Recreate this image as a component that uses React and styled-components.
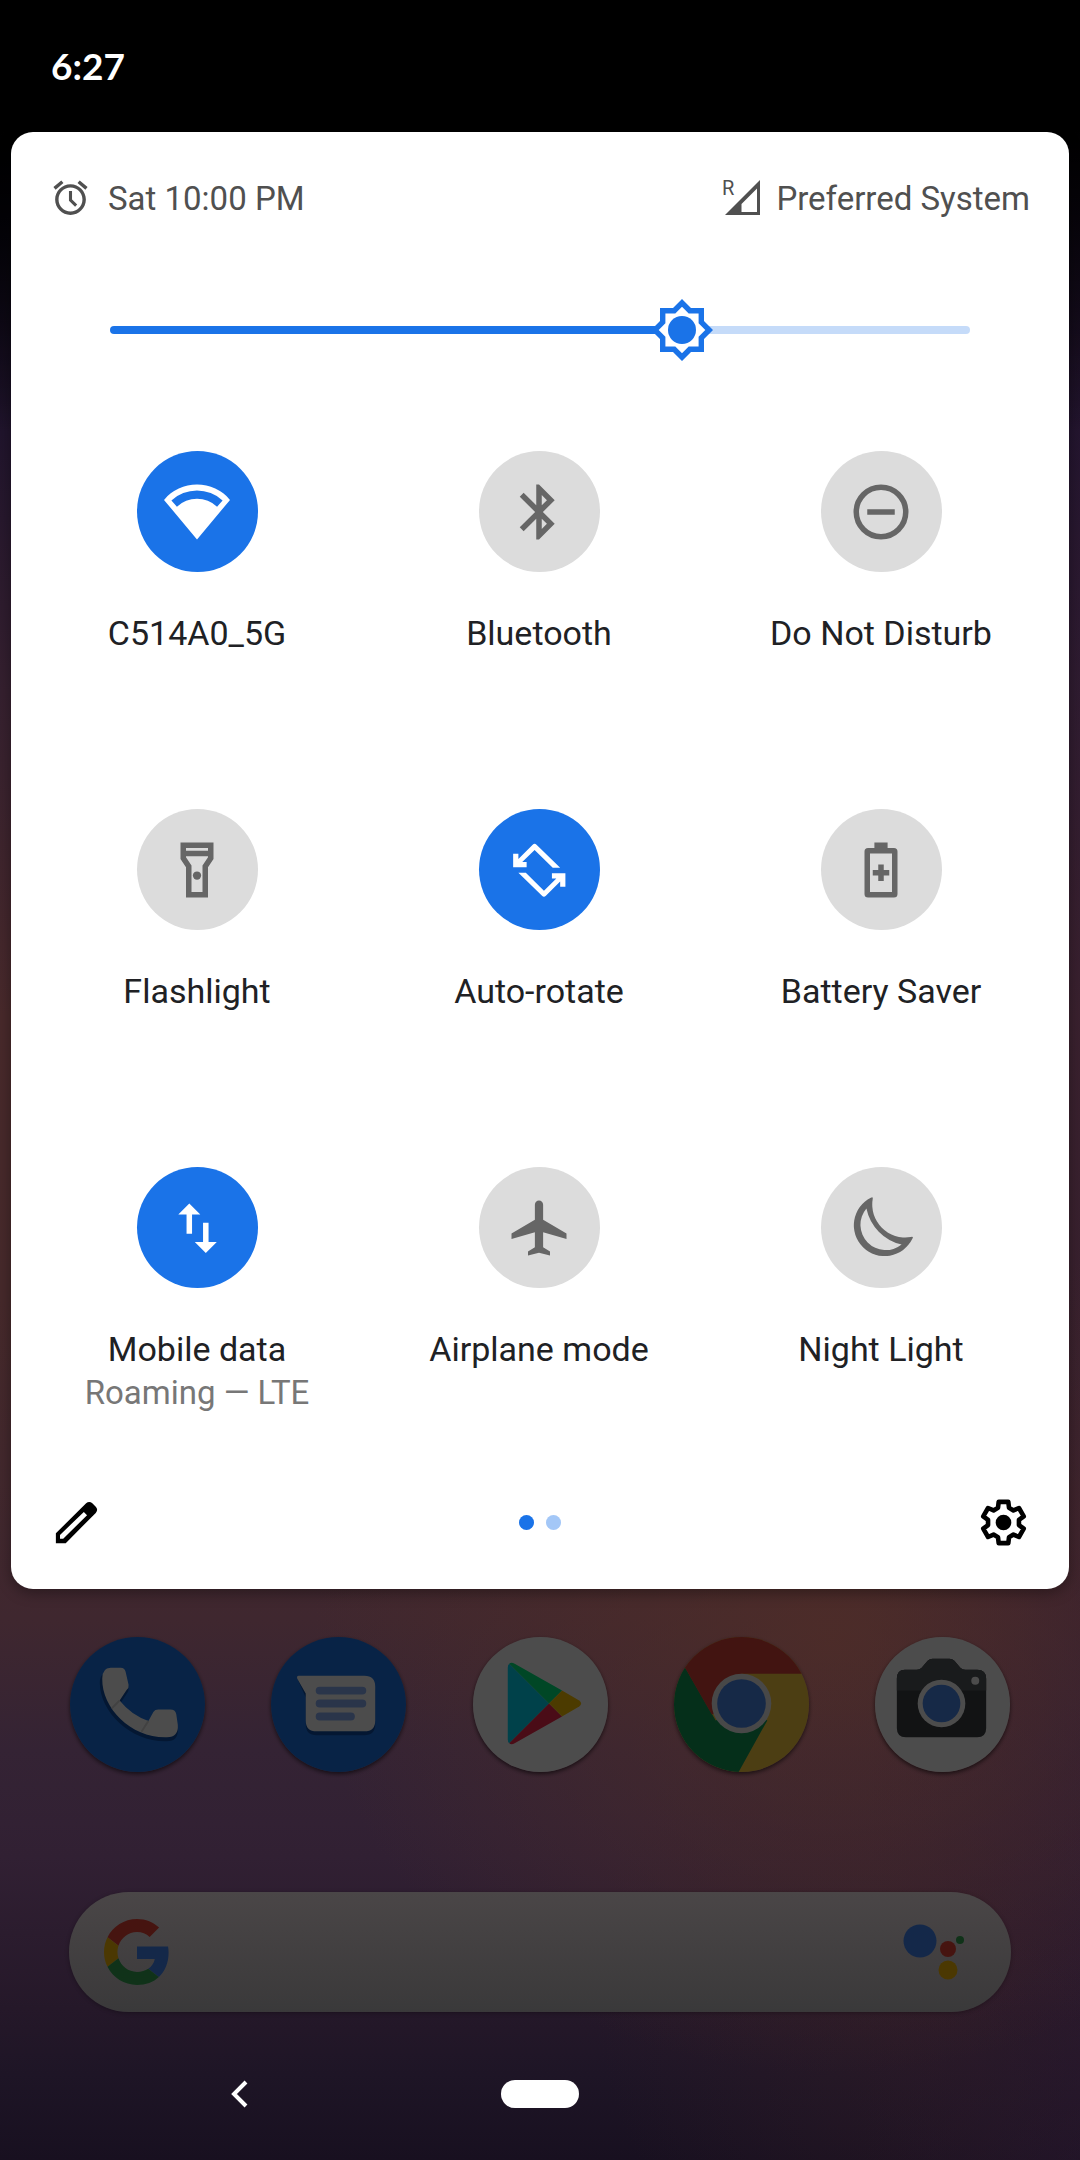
import React, { useState } from "react";
import styled, { createGlobalStyle } from "styled-components";

const BLUE = "#1a73e8";
const THUMB = 62;

const GlobalStyle = createGlobalStyle`
  *, *::before, *::after { box-sizing: border-box; }
  body { margin: 0; background: #000; }
  button { border: 0; padding: 0; background: none; font: inherit; color: inherit; cursor: pointer; }
  svg { display: block; }
`;

const Screen = styled.main`
  display: flex;
  flex-direction: column;
  min-height: 100vh;
  font-family: Roboto, "Noto Sans", sans-serif;
  background:
    linear-gradient(to bottom, #000 6%, rgba(0, 0, 0, 0) 20%),
    radial-gradient(ellipse 48% 20% at 77% 76%, rgba(82, 46, 38, 0.7), rgba(82, 46, 38, 0) 100%),
    radial-gradient(ellipse 30% 16% at 85% 92%, rgba(52, 30, 38, 0.5), rgba(52, 30, 38, 0) 100%),
    linear-gradient(to left, rgba(40, 22, 50, 0.45), rgba(40, 22, 50, 0) 20%),
    linear-gradient(
      to bottom,
      #0a0714 10%,
      #20142c 20%,
      #35202f 32%,
      #48292b 47%,
      #46292b 60%,
      #3f272f 75%,
      #342334 81%,
      #312033 86%,
      #251829 93%,
      #1e1526 96%,
      #181020 100%
    );
`;

const StatusBar = styled.header`
  display: flex;
  align-items: center;
  height: 132px;
  padding: 0 51px;
  color: #fff;
`;

const Clock = styled.time`
  font-family: Lato, Roboto, sans-serif;
  font-size: 37px;
  font-weight: 700;
  line-height: 48px;
`;

const Panel = styled.section`
  display: flex;
  flex-direction: column;
  margin: 0 11px;
  padding: 43px 0 39px;
  border-radius: 22px;
  background: #fff;
  box-shadow: 0 4px 14px rgba(0, 0, 0, 0.35);
`;

const InfoRow = styled.div`
  display: flex;
  justify-content: space-between;
  padding: 0 39px;
  color: #505050;
  font-size: 33px;
  line-height: 48px;
`;

const Info = styled.span`
  display: flex;
  align-items: center;
  gap: ${(p) => p.$gap}px;
  white-space: nowrap;
`;

const Slider = styled.input`
  appearance: none;
  display: block;
  height: ${THUMB}px;
  margin: 76px 99px 0;
  background: transparent;
  cursor: pointer;

  &::-webkit-slider-runnable-track {
    height: 8px;
    border-radius: 4px;
    background: linear-gradient(
      to right,
      ${BLUE} calc(31px + (100% - 62px) * var(--level)),
      #c5dbf9 calc(31px + (100% - 62px) * var(--level))
    );
  }

  &::-webkit-slider-thumb {
    appearance: none;
    width: ${THUMB}px;
    height: ${THUMB}px;
    margin-top: -27px;
    background: center / contain no-repeat
      url("data:image/svg+xml,%3Csvg xmlns='http://www.w3.org/2000/svg' viewBox='-31 -31 62 62'%3E%3Cpath fill='%231a73e8' d='M0-31 9-22H22V-9L31 0 22 9V22H9L0 31-9 22H-22V9L-31 0-22-9V-22H-9z'/%3E%3Cpath fill='%23fff' d='M0-23.300 6.700-16.600H16.600V-6.700L23.300 0 16.600 6.700V16.600H6.700L0 23.300-6.700 16.600H-16.600V6.700L-23.300 0-16.600-6.700V-16.600H-6.700z'/%3E%3Ccircle r='14' fill='%231a73e8'/%3E%3C/svg%3E");
  }
`;

const Tiles = styled.div`
  display: grid;
  grid-template-columns: repeat(3, 1fr);
  row-gap: 154px;
  margin-top: 90px;
  padding: 0 17px 0 15px;
`;

const Tile = styled.button`
  display: flex;
  flex-direction: column;
  align-items: center;
  justify-content: flex-start;
`;

const Disc = styled.span`
  display: grid;
  place-items: center;
  width: 121px;
  height: 121px;
  margin-bottom: 39px;
  border-radius: 50%;
  background: ${(p) => (p.$on ? BLUE : "#dcdcdc")};
  color: ${(p) => (p.$on ? "#fff" : "#666")};
`;

const TileLabel = styled.span`
  color: #202124;
  font-size: 34px;
  line-height: 44px;
`;

const TileDetail = styled.span`
  color: #777;
  font-size: 33px;
  line-height: 44px;
`;

const PanelFooter = styled.footer`
  display: grid;
  grid-template-columns: 1fr auto 1fr;
  align-items: center;
  margin-top: 80px;
  padding: 0 38px;
  color: #000;
`;

const FooterButton = styled.button`
  justify-self: ${(p) => p.$side};
`;

const Pager = styled.div`
  display: flex;
  gap: 12px;
`;

const Dot = styled.span`
  width: 15px;
  height: 15px;
  border-radius: 50%;
  background: ${(p) => (p.$current ? BLUE : "#a3c7f7")};
`;

const Dock = styled.nav`
  display: flex;
  justify-content: space-between;
  margin-top: 48px;
  padding: 0 70px;
`;

const AppButton = styled.button`
  width: 135px;
  height: 135px;
  border-radius: 50%;
  box-shadow: 0 2px 4px rgba(0, 0, 0, 0.6);
  filter: brightness(0.3);
`;

const SearchBar = styled.form`
  display: flex;
  align-items: center;
  height: 120px;
  margin: 120px 69px 0;
  padding: 0 45px 0 35px;
  border-radius: 60px;
  background: linear-gradient(to bottom, #4a4647, #3a393a);
  box-shadow: 0 1px 4px rgba(0, 0, 0, 0.3);
`;

const SearchField = styled.input`
  flex: 1;
  min-width: 0;
  border: 0;
  outline: 0;
  background: transparent;
  color: #fff;
  font: 33px Roboto, sans-serif;
`;

const SearchButton = styled.button`
  filter: brightness(0.3);
`;

const NavBar = styled.nav`
  display: grid;
  grid-template-columns: repeat(3, 1fr);
  align-items: center;
  justify-items: center;
  flex: 1;
  padding: 16px 88px 0;
`;

const HomePill = styled.button`
  width: 78px;
  height: 28px;
  border-radius: 14px;
  background: #fff;
`;

function Icon({ size = 66, children }) {
  return (
    <svg width={size} height={size} viewBox="0 0 24 24" fill="currentColor" aria-hidden="true">
      {children}
    </svg>
  );
}

function AppIcon({ children }) {
  return (
    <svg width="135" height="135" viewBox="0 0 136 136" aria-hidden="true">
      {children}
    </svg>
  );
}

const rotateArrow =
  "M19.700 11.200L11.100 2.800Q10.400 2.100 9.700 2.800L4.500 8V6.100H2.600V11H7.500V9.100H5.900L10.400 4.700L17 11.200z";

// One tooth of the gear, repeated every sixty degrees around the centre.
const gearTooth = [
  [-2.4, -6.4],
  [-2.1, -9],
  [2.1, -9],
  [2.4, -6.4],
];
const gearPoints = [0, 1, 2, 3, 4, 5]
  .flatMap((step) => {
    const angle = (step * Math.PI) / 3;
    return gearTooth.map(([x, y]) => [
      12 + x * Math.cos(angle) - y * Math.sin(angle),
      12 + x * Math.sin(angle) + y * Math.cos(angle),
    ]);
  })
  .map(([x, y]) => `${x.toFixed(2)},${y.toFixed(2)}`)
  .join(" ");

const tiles = [
  {
    id: "wifi",
    label: "C514A0_5G",
    on: true,
    icon: (
      <path
        fillRule="evenodd"
        d="M12 22L0 7.600A15.600 15.600 0 0 1 24 7.600zM2.700 7.800L4.700 10.100A10.600 10.600 0 0 1 19.300 10.100L21.300 7.800A13.800 13.800 0 0 0 2.700 7.800z"
      />
    ),
  },
  {
    id: "bluetooth",
    label: "Bluetooth",
    icon: (
      <path d="M17.710 7.710L12 2h-1v7.590L6.410 5 5 6.410 10.590 12 5 17.590 6.410 19 11 14.410V22h1l5.710-5.710-4.300-4.290 4.300-4.290zM13 5.830l1.880 1.880L13 9.590V5.830zm1.880 10.460L13 18.170v-3.760l1.880 1.880z" />
    ),
  },
  {
    id: "dnd",
    label: "Do Not Disturb",
    icon: (
      <>
        <circle cx="12" cy="12" r="9" fill="none" stroke="currentColor" strokeWidth="2" />
        <path d="M7 11h10v2H7z" />
      </>
    ),
  },
  {
    id: "flashlight",
    label: "Flashlight",
    icon: (
      <>
        <path
          fillRule="evenodd"
          d="M18 2H6v6l2 3v11h8V11l2-3V2zM16 4v1H8V4h8zM14 10.400V20h-4v-9.610l-2-3V7h8v.39l-2 3.010z"
        />
        <circle cx="12" cy="14" r="1.500" />
      </>
    ),
  },
  {
    id: "rotate",
    label: "Auto-rotate",
    on: true,
    icon: (
      <>
        <path d={rotateArrow} />
        <path d={rotateArrow} transform="rotate(180 12.100 12.100)" />
      </>
    ),
  },
  {
    id: "battery",
    label: "Battery Saver",
    icon: (
      <path
        fillRule="evenodd"
        d="M9.600 2h4.800v2h2.300q1.300 0 1.300 1.300v15.400q0 1.300-1.300 1.300H7.300Q6 22 6 20.700V5.300Q6 4 7.300 4h2.300zM8 6v14h8V6zM11 10h2v2h2v2h-2v2h-2v-2H9v-2h2z"
      />
    ),
  },
  {
    id: "data",
    label: "Mobile data",
    detail: "Roaming — LTE",
    on: true,
    icon: <path d="M9.200 3.100l-4 4h3v7h2v-7h3zM16.200 17.100v-7h-2v7h-3l4 4 4-4z" />,
  },
  {
    id: "airplane",
    label: "Airplane mode",
    icon: (
      <path d="M22 16v-2l-8.500-5V3.500c0-.83-.67-1.500-1.500-1.500s-1.500.67-1.500 1.500V9L2 14v2l8.500-2.500V19L8 20.500V22l4-1 4 1v-1.500L13.500 19v-5.500L22 16z" />
    ),
  },
  {
    id: "night",
    label: "Night Light",
    icon: (
      <path
        fillRule="evenodd"
        d="M8.300 1Q9.100.4 9 1.400A12 12 0 0 0 22.800 15.300Q24 15 23.400 15.900A11.200 11.200 0 1 1 8.300 1zM6.700 4.900A9.200 9.200 0 0 0 19.500 18A17 17 0 0 1 6.700 4.900z"
      />
    ),
  },
];

const apps = [
  {
    name: "Phone",
    art: (
      <>
        <circle cx="68" cy="68" r="68" fill="#1b75e8" />
        <path
          fill="#0d4ea6"
          d="M41 35H51q4 0 5 4l3 13q.6 3-2 5.500L50 68q12 15 29 20.500l5-9q1.500-2.500 5-2.500h12q5 0 6 4.500l1.600 11q1 12.500-11 12.500C62 106 30 76 30 46q0-11 11-11z"
        />
        <path
          fill="#fff"
          d="M41 31H51q4 0 5 4l3 13q.6 3-2 5.500L50 64q12 15 29 20.500l5-9q1.500-2.500 5-2.500h12q5 0 6 4.500l1.600 11q1 12.500-11 12.500C62 102 32 72 32.500 42q0-11 8.500-11z"
        />
        <path d="M50 64l-8 8M79 84.500l-7 11" stroke="#dcdcdc" strokeWidth="2" />
      </>
    ),
  },
  {
    name: "Messages",
    art: (
      <>
        <circle cx="68" cy="68" r="68" fill="#1b75e8" />
        <path fill="#0d4ea6" d="M27 43h67q11 0 11 11v34q0 11-11 11H46q-11 0-11-11V61z" />
        <path fill="#fff" d="M28 39h66q11 0 11 11v34q0 11-11 11H46q-11 0-11-11V57L26.500 42q-1-3 1.500-3z" />
        <path d="M49 54h43M49 67h43M49 80h31.500" stroke="#8cb0f8" strokeWidth="8" strokeLinecap="round" />
      </>
    ),
  },
  {
    name: "Play Store",
    art: (
      <>
        <circle cx="68" cy="68" r="68" fill="#fff" />
        <path fill="#00d7f7" d="M36.500 27L76.600 67L36.500 107Q35 106 35 103V31Q35 28 36.500 27z" />
        <path fill="#00ec7e" d="M36.500 27Q38.500 25 42 27L89.700 54L76.600 67z" />
        <path fill="#f5294c" d="M36.500 107Q38.500 109 42 107L89.700 80L76.600 67z" />
        <path fill="#ffc400" d="M89.700 54L107 64Q111 67 107 70L89.700 80L76.600 67z" />
      </>
    ),
  },
  {
    name: "Chrome",
    art: (
      <>
        <clipPath id="chrome-disc">
          <circle cx="68" cy="68" r="68" />
        </clipPath>
        <g clipPath="url(#chrome-disc)">
          <path fill="#ffcd40" d="M0 0h136v136H0z" />
          <path fill="#0f9d58" d="M-2 8L42 84L68 68L94 84L64 138H-5V8z" />
          <path fill="#db4437" d="M-2 8L38 78L68 68V37H140V-5H-2z" />
        </g>
        <circle cx="68" cy="67" r="30" fill="#f1f1f1" />
        <circle cx="68" cy="67" r="24.500" fill="#4a87ee" />
      </>
    ),
  },
  {
    name: "Camera",
    art: (
      <>
        <circle cx="68" cy="68" r="68" fill="#fff" />
        <path
          fill="#3c4043"
          d="M30 33h12q3 0 5-2l6-7q2-2 5-2h17q3 0 5 2l6 7q2 2 5 2h12q9 0 9 9v50q0 9-9 9H31q-9 0-9-9V42q0-9 8-9z"
        />
        <path fill="#54595d" d="M30 33h12q3 0 5-2l6-7q2-2 5-2h17q3 0 5 2l6 7q2 2 5 2h12q9 0 9 9v12H22V42q0-9 8-9z" />
        <circle cx="67" cy="67" r="24" fill="#fff" />
        <circle cx="67" cy="67" r="19" fill="#4a87ee" />
        <circle cx="101" cy="44" r="4" fill="#fff" />
      </>
    ),
  },
];

export default function App() {
  const [level, setLevel] = useState(173);

  return (
    <>
      <GlobalStyle />
      <Screen>
        <StatusBar>
          <Clock>6:27</Clock>
        </StatusBar>

        <Panel aria-label="Quick settings">
          <InfoRow>
            <Info $gap={17}>
              <Icon size={41}>
                <g transform="translate(0 -1)">
                  <path d="M22 5.720l-4.600-3.860-1.290 1.530 4.600 3.860L22 5.720zM7.880 3.390L6.600 1.860 2 5.710l1.290 1.530 4.590-3.850zM12 4c-4.970 0-9 4.030-9 9s4.020 9 9 9c4.970 0 9-4.030 9-9s-4.030-9-9-9zm0 16c-3.870 0-7-3.130-7-7s3.130-7 7-7 7 3.130 7 7-3.130 7-7 7z" />
                  <path d="M12 8v5.400l3.300 3.200" fill="none" stroke="currentColor" strokeWidth="1.800" />
                </g>
              </Icon>
              Sat 10:00 PM
            </Info>
            <Info $gap={15}>
              <svg width="40" height="48" viewBox="0 0 40 48" fill="currentColor" role="img" aria-label="Roaming signal">
                <text x="1" y="20" fontSize="20">
                  R
                </text>
                <path fillRule="evenodd" d="M4 40L39 5V40zM20.500 29V37H36V13.500z" />
              </svg>
              Preferred System
            </Info>
          </InfoRow>

          <Slider
            type="range"
            aria-label="Display brightness"
            min="0"
            max="255"
            value={level}
            onChange={(e) => setLevel(Number(e.target.value))}
            style={{ "--level": level / 255 }}
          />

          <Tiles>
            {tiles.map((tile) => (
              <Tile key={tile.id} type="button" aria-pressed={Boolean(tile.on)}>
                <Disc $on={tile.on}>
                  <Icon>{tile.icon}</Icon>
                </Disc>
                <TileLabel>{tile.label}</TileLabel>
                {tile.detail && <TileDetail>{tile.detail}</TileDetail>}
              </Tile>
            ))}
          </Tiles>

          <PanelFooter>
            <FooterButton type="button" aria-label="Edit" $side="start">
              <Icon size={55}>
                <path
                  fillRule="evenodd"
                  d="M3 16.700V21h4.300L20.400 7.800c.8-.8.8-1.900 0-2.700l-1.500-1.500c-.8-.8-1.900-.8-2.700 0zM4.800 17.400L15.200 7.400L16.600 8.800L6.200 19.100H4.800z"
                />
              </Icon>
            </FooterButton>
            <Pager>
              <Dot $current />
              <Dot />
            </Pager>
            <FooterButton type="button" aria-label="Settings" $side="end">
              <Icon size={55}>
                <polygon
                  points={gearPoints}
                  fill="none"
                  stroke="currentColor"
                  strokeWidth="2"
                  strokeLinejoin="round"
                />
                <circle cx="12" cy="12" r="3.400" />
              </Icon>
            </FooterButton>
          </PanelFooter>
        </Panel>

        <Dock aria-label="Apps">
          {apps.map((app) => (
            <AppButton key={app.name} type="button" aria-label={app.name}>
              <AppIcon>{app.art}</AppIcon>
            </AppButton>
          ))}
        </Dock>

        <SearchBar role="search">
          <SearchButton type="submit" aria-label="Google search">
            <svg width="66" height="66" viewBox="0 0 48 48" aria-hidden="true">
              <path fill="#ea4335" d="M24 9.500c3.540 0 6.710 1.220 9.210 3.600l6.850-6.850C35.900 2.380 30.470 0 24 0 14.620 0 6.510 5.380 2.560 13.220l7.980 6.190C12.430 13.720 17.740 9.500 24 9.500z" />
              <path fill="#4285f4" d="M46.980 24.550c0-1.570-.15-3.090-.38-4.550H24v9.020h12.940c-.58 2.960-2.260 5.480-4.780 7.180l7.730 6c4.510-4.180 7.090-10.360 7.090-17.650z" />
              <path fill="#fbbc05" d="M10.530 28.590c-.48-1.450-.76-2.990-.76-4.590s.27-3.140.76-4.590l-7.980-6.190C.92 16.460 0 20.120 0 24c0 3.880.92 7.540 2.560 10.780l7.970-6.190z" />
              <path fill="#34a853" d="M24 48c6.480 0 11.930-2.130 15.890-5.810l-7.730-6c-2.150 1.450-4.920 2.300-8.160 2.300-6.260 0-11.570-4.220-13.470-9.910l-7.980 6.190C6.510 42.620 14.620 48 24 48z" />
            </svg>
          </SearchButton>
          <SearchField type="text" aria-label="Search" />
          <SearchButton type="button" aria-label="Assistant">
            <svg width="64" height="66" viewBox="0 0 64 66" aria-hidden="true">
              <circle cx="18" cy="22" r="16.500" fill="#4285f4" />
              <circle cx="46" cy="30" r="8" fill="#ea4335" />
              <circle cx="58" cy="21" r="4" fill="#34a853" />
              <circle cx="46" cy="51" r="9.500" fill="#fbbc05" />
            </svg>
          </SearchButton>
        </SearchBar>

        <NavBar aria-label="System navigation">
          <button type="button" aria-label="Back">
            <svg width="18" height="28" viewBox="0 0 18 28" fill="none" stroke="#fff" strokeWidth="4" aria-hidden="true">
              <path d="M16 2L4 14L16 26" />
            </svg>
          </button>
          <HomePill type="button" aria-label="Home" />
        </NavBar>
      </Screen>
    </>
  );
}
